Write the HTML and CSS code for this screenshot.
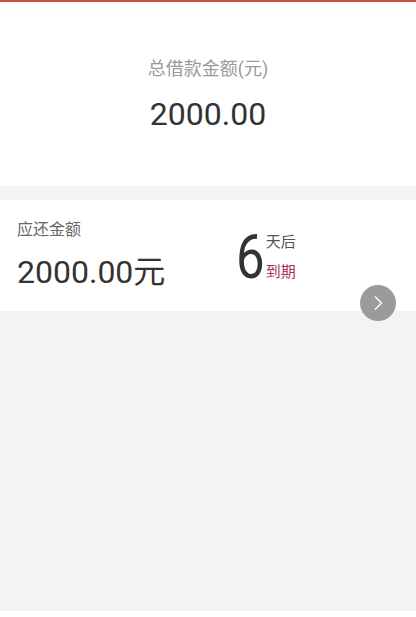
FILE: index.html
```html
<!DOCTYPE html>
<html lang="zh-CN">
<head>
    <meta charset="UTF-8">
    <meta name="viewport" content="width=device-width, initial-scale=1.0">
    <title>借款详情</title>
    <link rel="stylesheet" href="styles.css">
</head>
<body>
    <div class="page">
        <div class="summary">
            <p class="summary-label">总借款金额(元)</p>
            <p class="summary-amount">2000.00</p>
        </div>

        <div class="repay-card">
            <div class="repay-left">
                <p class="repay-label">应还金额</p>
                <p class="repay-amount">2000.00元</p>
            </div>
            <div class="due">
                <span class="due-days">6</span>
                <div class="due-text">
                    <span class="due-after">天后</span>
                    <span class="due-expire">到期</span>
                </div>
            </div>
            <button class="next-btn" aria-label="下一步">
                <svg width="14" height="16" viewBox="0 0 14 16">
                    <path d="M4 1.5 L10.5 8 L4 14.5" fill="none" stroke="#fff" stroke-width="1.4"/>
                </svg>
            </button>
        </div>

        <div class="filler"></div>
        <div class="footer"></div>
    </div>
</body>
</html>
```

FILE: styles.css
```css
body {
    margin: 0;
    padding: 0;
    font-family: Roboto, "Noto Sans CJK SC", sans-serif;
    background: #f3f3f3;
}

p {
    margin: 0;
}

.page {
    display: flex;
    flex-direction: column;
    height: 617px;
}

.summary {
    border-top: 2px solid #c4513d;
    background: #fff;
    display: flex;
    flex-direction: column;
    align-items: center;
    padding-top: 54px;
    height: 130px;
}

.summary-label {
    font-size: 18px;
    line-height: 26px;
    color: #9a9a9a;
}

.summary-amount {
    margin-top: 12px;
    font-size: 32px;
    line-height: 40px;
    color: #333;
}

.repay-card {
    position: relative;
    margin-top: 14px;
    height: 111px;
    box-sizing: border-box;
    padding: 19px 0 0 17px;
    background: #fff;
    display: flex;
}

.repay-left {
    flex: 0 0 219px;
}

.repay-label {
    font-size: 16px;
    line-height: 22px;
    color: #666;
}

.repay-amount {
    margin-top: 11px;
    font-size: 32px;
    line-height: 40px;
    color: #333;
}

.due {
    display: flex;
    align-items: center;
    margin-top: 10px;
    height: 56px;
}

.due-days {
    font-size: 62px;
    line-height: 56px;
    color: #333;
    transform: scaleX(0.82);
    transform-origin: left center;
    margin-right: -5px;
}

.due-text {
    display: flex;
    flex-direction: column;
    gap: 8px;
    font-size: 15px;
    line-height: 22px;
}

.due-after {
    color: #555;
}

.due-expire {
    color: #a3334f;
}

.next-btn {
    position: absolute;
    right: 20px;
    top: 85px;
    width: 36px;
    height: 36px;
    border: none;
    border-radius: 50%;
    background: #9b9b9b;
    padding: 0;
    display: flex;
    align-items: center;
    justify-content: center;
}

.filler {
    flex: 1;
}

.footer {
    height: 6px;
    background: #fff;
}
```
